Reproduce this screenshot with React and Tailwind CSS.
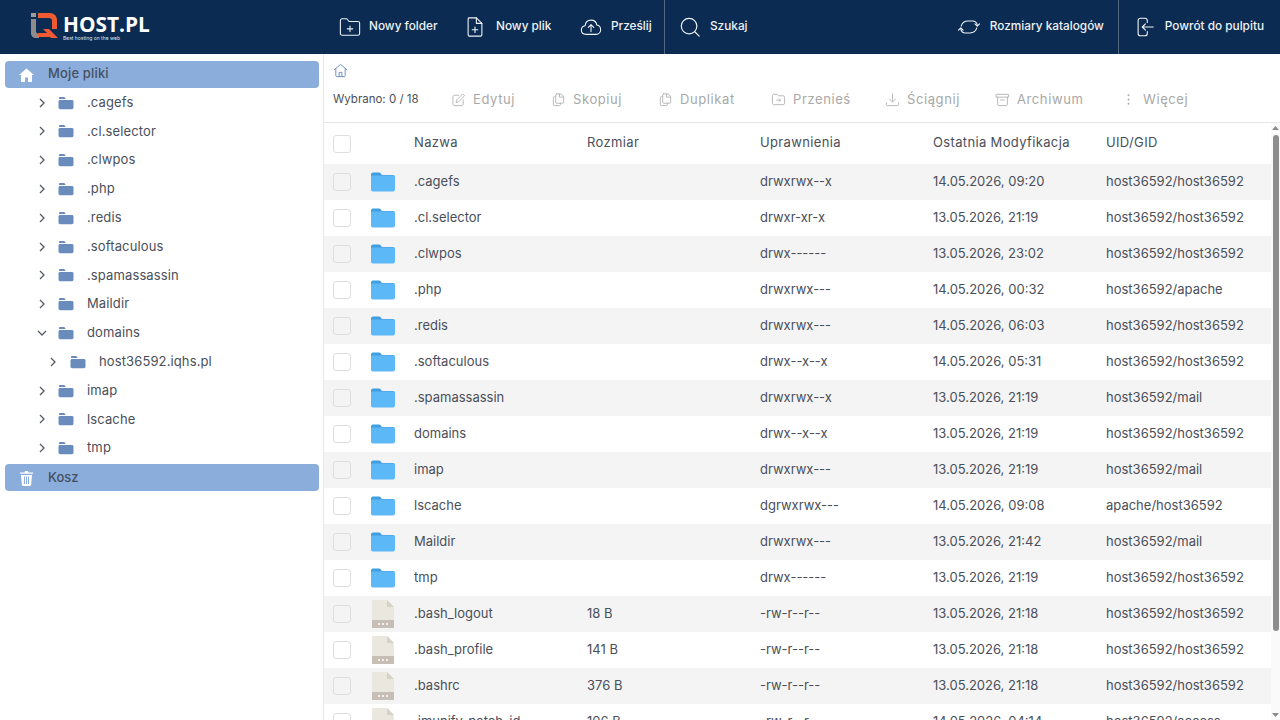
import React from "react";

const Chevron = ({ open }) => (
  <svg width="14" height="14" viewBox="0 0 14 14" fill="none" stroke="#555b66" strokeWidth="1.3" className="shrink-0">
    {open ? <path d="M3 5l4 4 4-4" /> : <path d="M5 3l4 4-4 4" />}
  </svg>
);
const TreeFolder = () => (
  <svg width="16" height="14" viewBox="0 0 16 14" className="shrink-0">
    <path d="M1 3V2.200C1 1.500 1.500 1 2.200 1h3.600c.5 0 .9.3 1.200.7L7.600 3z" fill="#6a8cbd" />
    <path d="M.5 5.600C.5 4.700 1.200 4 2 4h12c.8 0 1.500.7 1.500 1.600v6c0 .9-.7 1.600-1.500 1.600H2c-.8 0-1.500-.7-1.500-1.600z" fill="#6a8cbd" />
  </svg>
);
const BigFolder = () => (
  <svg width="24" height="20" viewBox="0 0 24 20">
    <path d="M0 2.500C0 1.200 1 .5 2 .5h6c.8 0 1.400.4 1.800 1L11 3h11c1 0 2 .8 2 2v1H0z" fill="#3f9fe0" />
    <path d="M0 5c0-.8.6-1.500 1.500-1.500h21c.9 0 1.500.7 1.500 1.500v12.500c0 1.100-.9 2-2 2H2c-1.100 0-2-.9-2-2z" fill="#5cb8f7" />
  </svg>
);
const FileIco = () => (
  <svg width="22" height="28" viewBox="0 0 22 28">
    <path d="M0 0h15l7 7v21H0z" fill="#eae8de" />
    <path d="M15 0l7 7h-7z" fill="#d6d3c6" />
    <rect x="0" y="20" width="22" height="8" fill="#c7beb6" />
    <circle cx="7" cy="24" r="1" fill="#fff" />
    <circle cx="11" cy="24" r="1" fill="#fff" />
    <circle cx="15" cy="24" r="1" fill="#fff" />
  </svg>
);

const tree = [
  [".cagefs", 0], [".cl.selector", 0], [".clwpos", 0], [".php", 0], [".redis", 0], [".softaculous", 0], [".spamassassin", 0], ["Maildir", 0],
  ["domains", 0, true], ["host36592.iqhs.pl", 1], ["imap", 0], ["lscache", 0], ["tmp", 0],
];
const rows = [
  [".cagefs", "", "drwxrwx--x", "14.05.2026, 09:20", "host36592/host36592"],
  [".cl.selector", "", "drwxr-xr-x", "13.05.2026, 21:19", "host36592/host36592"],
  [".clwpos", "", "drwx------", "13.05.2026, 23:02", "host36592/host36592"],
  [".php", "", "drwxrwx---", "14.05.2026, 00:32", "host36592/apache"],
  [".redis", "", "drwxrwx---", "14.05.2026, 06:03", "host36592/host36592"],
  [".softaculous", "", "drwx--x--x", "14.05.2026, 05:31", "host36592/host36592"],
  [".spamassassin", "", "drwxrwx--x", "13.05.2026, 21:19", "host36592/mail"],
  ["domains", "", "drwx--x--x", "13.05.2026, 21:19", "host36592/host36592"],
  ["imap", "", "drwxrwx---", "13.05.2026, 21:19", "host36592/mail"],
  ["lscache", "", "dgrwxrwx---", "14.05.2026, 09:08", "apache/host36592"],
  ["Maildir", "", "drwxrwx---", "13.05.2026, 21:42", "host36592/mail"],
  ["tmp", "", "drwx------", "13.05.2026, 21:19", "host36592/host36592"],
  [".bash_logout", "18 B", "-rw-r--r--", "13.05.2026, 21:18", "host36592/host36592", 1],
  [".bash_profile", "141 B", "-rw-r--r--", "13.05.2026, 21:18", "host36592/host36592", 1],
  [".bashrc", "376 B", "-rw-r--r--", "13.05.2026, 21:18", "host36592/host36592", 1],
  [".imunify_patch_id", "106 B", "-rw-r--r--", "14.05.2026, 04:14", "host36592/access", 1],
];

const Top = ({ icon, label, gap = "gap-[9px]" }) => (
  <div className={`flex items-center ${gap}`}>
    {icon}
    <span className="text-[11.8px] leading-[16px] -mt-[2px] font-medium text-[#eef2f6] whitespace-nowrap">{label}</span>
  </div>
);
const ic = { width: 22, height: 24, viewBox: "0 0 24 24", fill: "none", stroke: "#eef2f6", strokeWidth: 1.2, strokeLinecap: "round", strokeLinejoin: "round", className: "shrink-0" };
const tool = { width: 15, height: 15, viewBox: "0 0 16 16", fill: "none", stroke: "#b5b5b5", strokeWidth: 1, strokeLinecap: "round", strokeLinejoin: "round" };
const Tool = ({ icon, label, w }) => (
  <div className={`flex items-center gap-[7px] ${w}`}>
    {icon}
    <span className="text-[13px] tracking-[0.6px] text-[#a8a8a8]">{label}</span>
  </div>
);
const Copy = () => (
  <svg {...tool}><path d="M6 2h3.500c2 0 4 2 4 4v5c0 .6-.4 1-1 1H6c-.6 0-1-.4-1-1V3c0-.6.4-1 1-1z" /><path d="M9 2v3.500h4.500M5 5H3.500c-.6 0-1 .4-1 1v7.500c0 .6.4 1 1 1H9c.6 0 1-.4 1-1V12" /></svg>
);

export default function App() {
  return (
    <div className="w-[1280px] h-[720px] overflow-hidden flex flex-col bg-white font-['Inter',sans-serif] text-[#4a4f5a]">
      <header className="h-[54px] shrink-0 bg-[#0b2b52] flex items-stretch">
        <div className="w-[339px] shrink-0 pl-[31px] flex items-center">
          <svg width="29" height="26" viewBox="0 0 29 26" className="shrink-0 -mt-[2px]">
            <rect x="0" y="0" width="5" height="4" fill="#9b9b9b" />
            <path d="M0 6h5v13l3 3v3H5c-3 0-5-2-5-5z" fill="#8d8d8d" />
            <path d="M7 0h12c4 0 7 3 7 7v9h-5V8c0-2-1-3-3-3H7z" fill="#ef5a33" />
            <path d="M7 20h9l-4-4h6l9 9h-7l-1-1H7z" fill="#ef5a33" />
          </svg>
          <div className="ml-[3px] flex flex-col -mt-[1px]">
            <span className="text-[20.8px] leading-[22px] font-bold text-white font-['Open_Sans',sans-serif]">HOST.PL</span>
            <span className="text-[5px] leading-[6px] text-[#dfe5ee] whitespace-nowrap">Best hosting on the web</span>
          </div>
        </div>
        <div className="flex items-center w-[326px] shrink-0 border-r border-[#55677f]">
          <div className="w-[125px]">
            <Top gap="gap-[8px]" icon={<svg {...ic}><path d="M1.500 7V5c0-1.100.9-2 2-2h5l2.500 3h9.500c1.100 0 2 .9 2 2v11c0 1.100-.9 2-2 2h-17c-1.100 0-2-.9-2-2z" /><path d="M12 11v6M9 14h6" /></svg>} label="Nowy folder" />
          </div>
          <div className="w-[116px]">
            <Top gap="gap-[10px]" icon={<svg {...ic}><path d="M5 2h8.500L19.500 8v12.500c0 1-.8 1.500-1.500 1.500H6c-.8 0-1.500-.6-1.500-1.500V3.500C4.500 2.600 5 2 5 2z" /><path d="M13.500 2v6h6M12 12v6M9 15h6" /></svg>} label="Nowy plik" />
          </div>
          <Top icon={<svg {...ic}><path d="M6.500 20C3.500 20 1.500 18 1.500 15.300c0-2.400 1.700-4.300 4-4.600C6 7 8.700 4.500 12 4.500c3.200 0 5.800 2.300 6.400 5.400 2.400.4 4.100 2.500 4.100 5 0 2.800-2 5.100-5 5.100z" /><path d="M12 17v-7M9 12.500L12 9.500l3 3" /></svg>} label="Prześlij" />
        </div>
        <div className="pl-[14px] flex items-center">
          <Top gap="gap-[9px]" icon={<svg {...ic} strokeWidth="1.300"><circle cx="11" cy="11" r="8.500" /><path d="M17.500 17.500L22 22" /></svg>} label="Szukaj" />
        </div>
        <div className="ml-auto flex items-stretch">
          <div className="flex items-center pr-[14px] border-r border-[#55677f]">
            <Top gap="gap-[10px]" icon={<svg {...ic}><path d="M3.500 11C4.500 7.500 7 5.500 11 5.500h5c2.800 0 4.500 1.800 5 4.500" /><path d="M18.500 8.500L21 11l2.500-2.500" /><path d="M20.500 13c-1 3.500-3.500 5.500-7.500 5.500H8c-2.800 0-4.500-1.800-5-4.500" /><path d="M5.500 15.500L3 13 .5 15.500" /></svg>} label="Rozmiary katalogów" />
          </div>
          <div className="flex items-center pl-[15px] pr-[16px]">
            <Top gap="gap-[9px]" icon={<svg {...ic}><path d="M14.500 7V5c0-1.500-1-2.500-2.500-2.500H7C5.500 2.500 4.500 3.500 4.500 5v14c0 1.500 1 2.500 2.500 2.500h5c1.500 0 2.500-1 2.500-2.500v-2" /><path d="M21 12H9M12.500 8.500L9 12l3.500 3.500" /></svg>} label="Powrót do pulpitu" />
          </div>
        </div>
      </header>

      <div className="flex-1 flex min-h-0">
        <aside className="w-[324px] shrink-0 border-r border-[#e8e8e8] pt-[7px] pl-[5px] pr-[4px] flex flex-col">
          <div className="h-[27px] rounded-[4px] bg-[#8aaddb] flex items-center pl-[14px] gap-[14px]">
            <svg width="15" height="14" viewBox="0 0 15 14" fill="#fff" className="shrink-0"><path d="M7.500.5L15 7h-2v7H9V9.500H6V14H2V7H0z" /></svg>
            <span className="text-[13px] font-medium text-[#47505f] tracking-[0.15px] -mt-[2px]">Moje pliki</span>
          </div>
          <div className="flex flex-col pt-[0.2px] pb-[1.8px]">
            {tree.map(([n, d, open]) => (
              <div key={n} className={`h-[28.8px] flex items-center ${d ? "pl-[41px]" : "pl-[30px]"}`}>
                <Chevron open={open} />
                <span className={d ? "ml-[10px]" : "ml-[9px]"}><TreeFolder /></span>
                <span className="ml-[13px] text-[13px] tracking-[0.12px] text-[#4a4f5a] whitespace-nowrap">{n}</span>
              </div>
            ))}
          </div>
          <div className="h-[27px] rounded-[4px] bg-[#8aaddb] flex items-center pl-[14px] gap-[14px]">
            <svg width="15" height="16" viewBox="0 0 15 16" fill="#fff" className="shrink-0"><path d="M1 2.500h4.500L6 1h3l.5 1.500H14v1.200H1z" /><path d="M2 5h11l-.8 9.500c0 .8-.6 1.500-1.400 1.500H4.200c-.8 0-1.400-.7-1.400-1.500zM5 6.500v7.500h1V6.500zm2 0v7.500h1V6.500zm2 0v7.500h1V6.500z" fillRule="evenodd" /></svg>
            <span className="text-[13px] font-medium text-[#47505f] -mt-[1px]">Kosz</span>
          </div>
        </aside>

        <main className="flex-1 min-w-0 flex flex-col">
          <div className="h-[69px] shrink-0 border-b border-[#e6e6e6] flex flex-col">
            <div className="h-[24px] pl-[9px] flex items-end">
              <svg width="15" height="15" viewBox="0 0 16 16" fill="none" stroke="#6a8cbd" strokeWidth="1" strokeLinejoin="round"><path d="M1 7.500L8 1.500l7 6M3 6v7.500c0 .6.400 1 1 1h8c.6 0 1-.4 1-1V6" /><path d="M6.500 14.500V10h3v4.500" /></svg>
            </div>
            <div className="h-[43px] pl-[9px] flex items-center">
              <span className="text-[11.500px] text-[#4a4f5a] w-[118px] shrink-0 whitespace-nowrap">Wybrano: 0 / 18</span>
              <Tool w="w-[100px]" label="Edytuj" icon={<svg {...tool}><path d="M13 8.500V13c0 .8-.6 1.500-1.500 1.500h-8C2.700 14.500 2 13.800 2 13V5c0-.8.700-1.500 1.500-1.500H8" /><path d="M5.500 11l.7-2.700L12.500 2l2 2-6.300 6.300z" /></svg>} />
              <Tool w="w-[107px]" label="Skopiuj" icon={<Copy />} />
              <Tool w="w-[113px]" label="Duplikat" icon={<Copy />} />
              <Tool w="w-[114px]" label="Przenieś" icon={<svg {...tool}><path d="M1.500 4c0-.8.6-1.500 1.500-1.500h3.500L8 4h5c.8 0 1.500.7 1.500 1.500V12c0 .8-.7 1.500-1.500 1.500H3c-.9 0-1.500-.7-1.500-1.500z" /><path d="M6 8.700h4M8.500 7l1.700 1.700-1.700 1.700" /></svg>} />
              <Tool w="w-[110px]" label="Ściągnij" icon={<svg {...tool}><path d="M8 2v8.500M4.800 7.500L8 10.700l3.200-3.200M1.500 11.500v2c0 .5.400 1 1 1h11c.6 0 1-.5 1-1v-2" /></svg>} />
              <Tool w="w-[126px]" label="Archiwum" icon={<svg {...tool}><rect x="1.500" y="2.500" width="13" height="3" /><path d="M2.800 5.500v8c0 .6.400 1 1 1h8.400c.6 0 1-.4 1-1v-8M6 8.500h4" /></svg>} />
              <Tool label="Więcej" icon={<svg width="15" height="15" viewBox="0 0 16 16" fill="#a8a8a8"><circle cx="8" cy="3.500" r="1" /><circle cx="8" cy="8" r="1" /><circle cx="8" cy="12.500" r="1" /></svg>} />
            </div>
          </div>
          <div className="flex-1 min-h-0 flex">
            <div className="flex-1 min-w-0 overflow-hidden">
              <div className="h-[41px] pb-[2px] grid grid-cols-[90px_173px_173px_173px_173px_1fr] items-center text-[13px] tracking-[0.35px] text-[#4a4f5a]">
                <div className="pl-[9px] pt-[2px]"><div className="w-[18px] h-[18px] rounded-[3px] border border-[#dedede] bg-white" /></div>
                <div>Nazwa</div><div>Rozmiar</div><div>Uprawnienia</div><div>Ostatnia Modyfikacja</div><div>UID/GID</div>
              </div>
              {rows.map((r, i) => (
                <div key={r[0]} className={`h-[36px] grid grid-cols-[90px_173px_173px_173px_173px_1fr] items-center text-[13px] text-[#4a4f5a] whitespace-nowrap ${i % 2 === 0 ? "bg-[#f4f4f4]" : "bg-white"}`}>
                  <div className="pl-[9px] flex items-center">
                    <div className={`w-[18px] h-[18px] shrink-0 rounded-[3px] border border-[#dedede] ${i % 2 === 0 ? "bg-[#f4f4f4]" : "bg-white"}`} />
                    <div className={`${r[5] ? "ml-[21px]" : "ml-[20px]"} flex items-center`}>{r[5] ? <FileIco /> : <BigFolder />}</div>
                  </div>
                  <div>{r[0]}</div><div>{r[1]}</div><div>{r[2]}</div><div>{r[3]}</div><div>{r[4]}</div>
                </div>
              ))}
            </div>
            <div className="w-[9px] shrink-0 flex flex-col items-center pt-[3px] pb-[3px] bg-[#fafafa]">
              <svg width="7" height="5" viewBox="0 0 7 5" className="shrink-0"><path d="M3.500 0L7 4H0z" fill="#8a8a8a" /></svg>
              <div className="mt-[4px] w-[6px] h-[496px] rounded-[3px] bg-[#8d8d8d]" />
              <svg width="7" height="5" viewBox="0 0 7 5" className="shrink-0 mt-auto"><path d="M3.500 5L7 1H0z" fill="#8a8a8a" /></svg>
            </div>
          </div>
        </main>
      </div>
    </div>
  );
}
